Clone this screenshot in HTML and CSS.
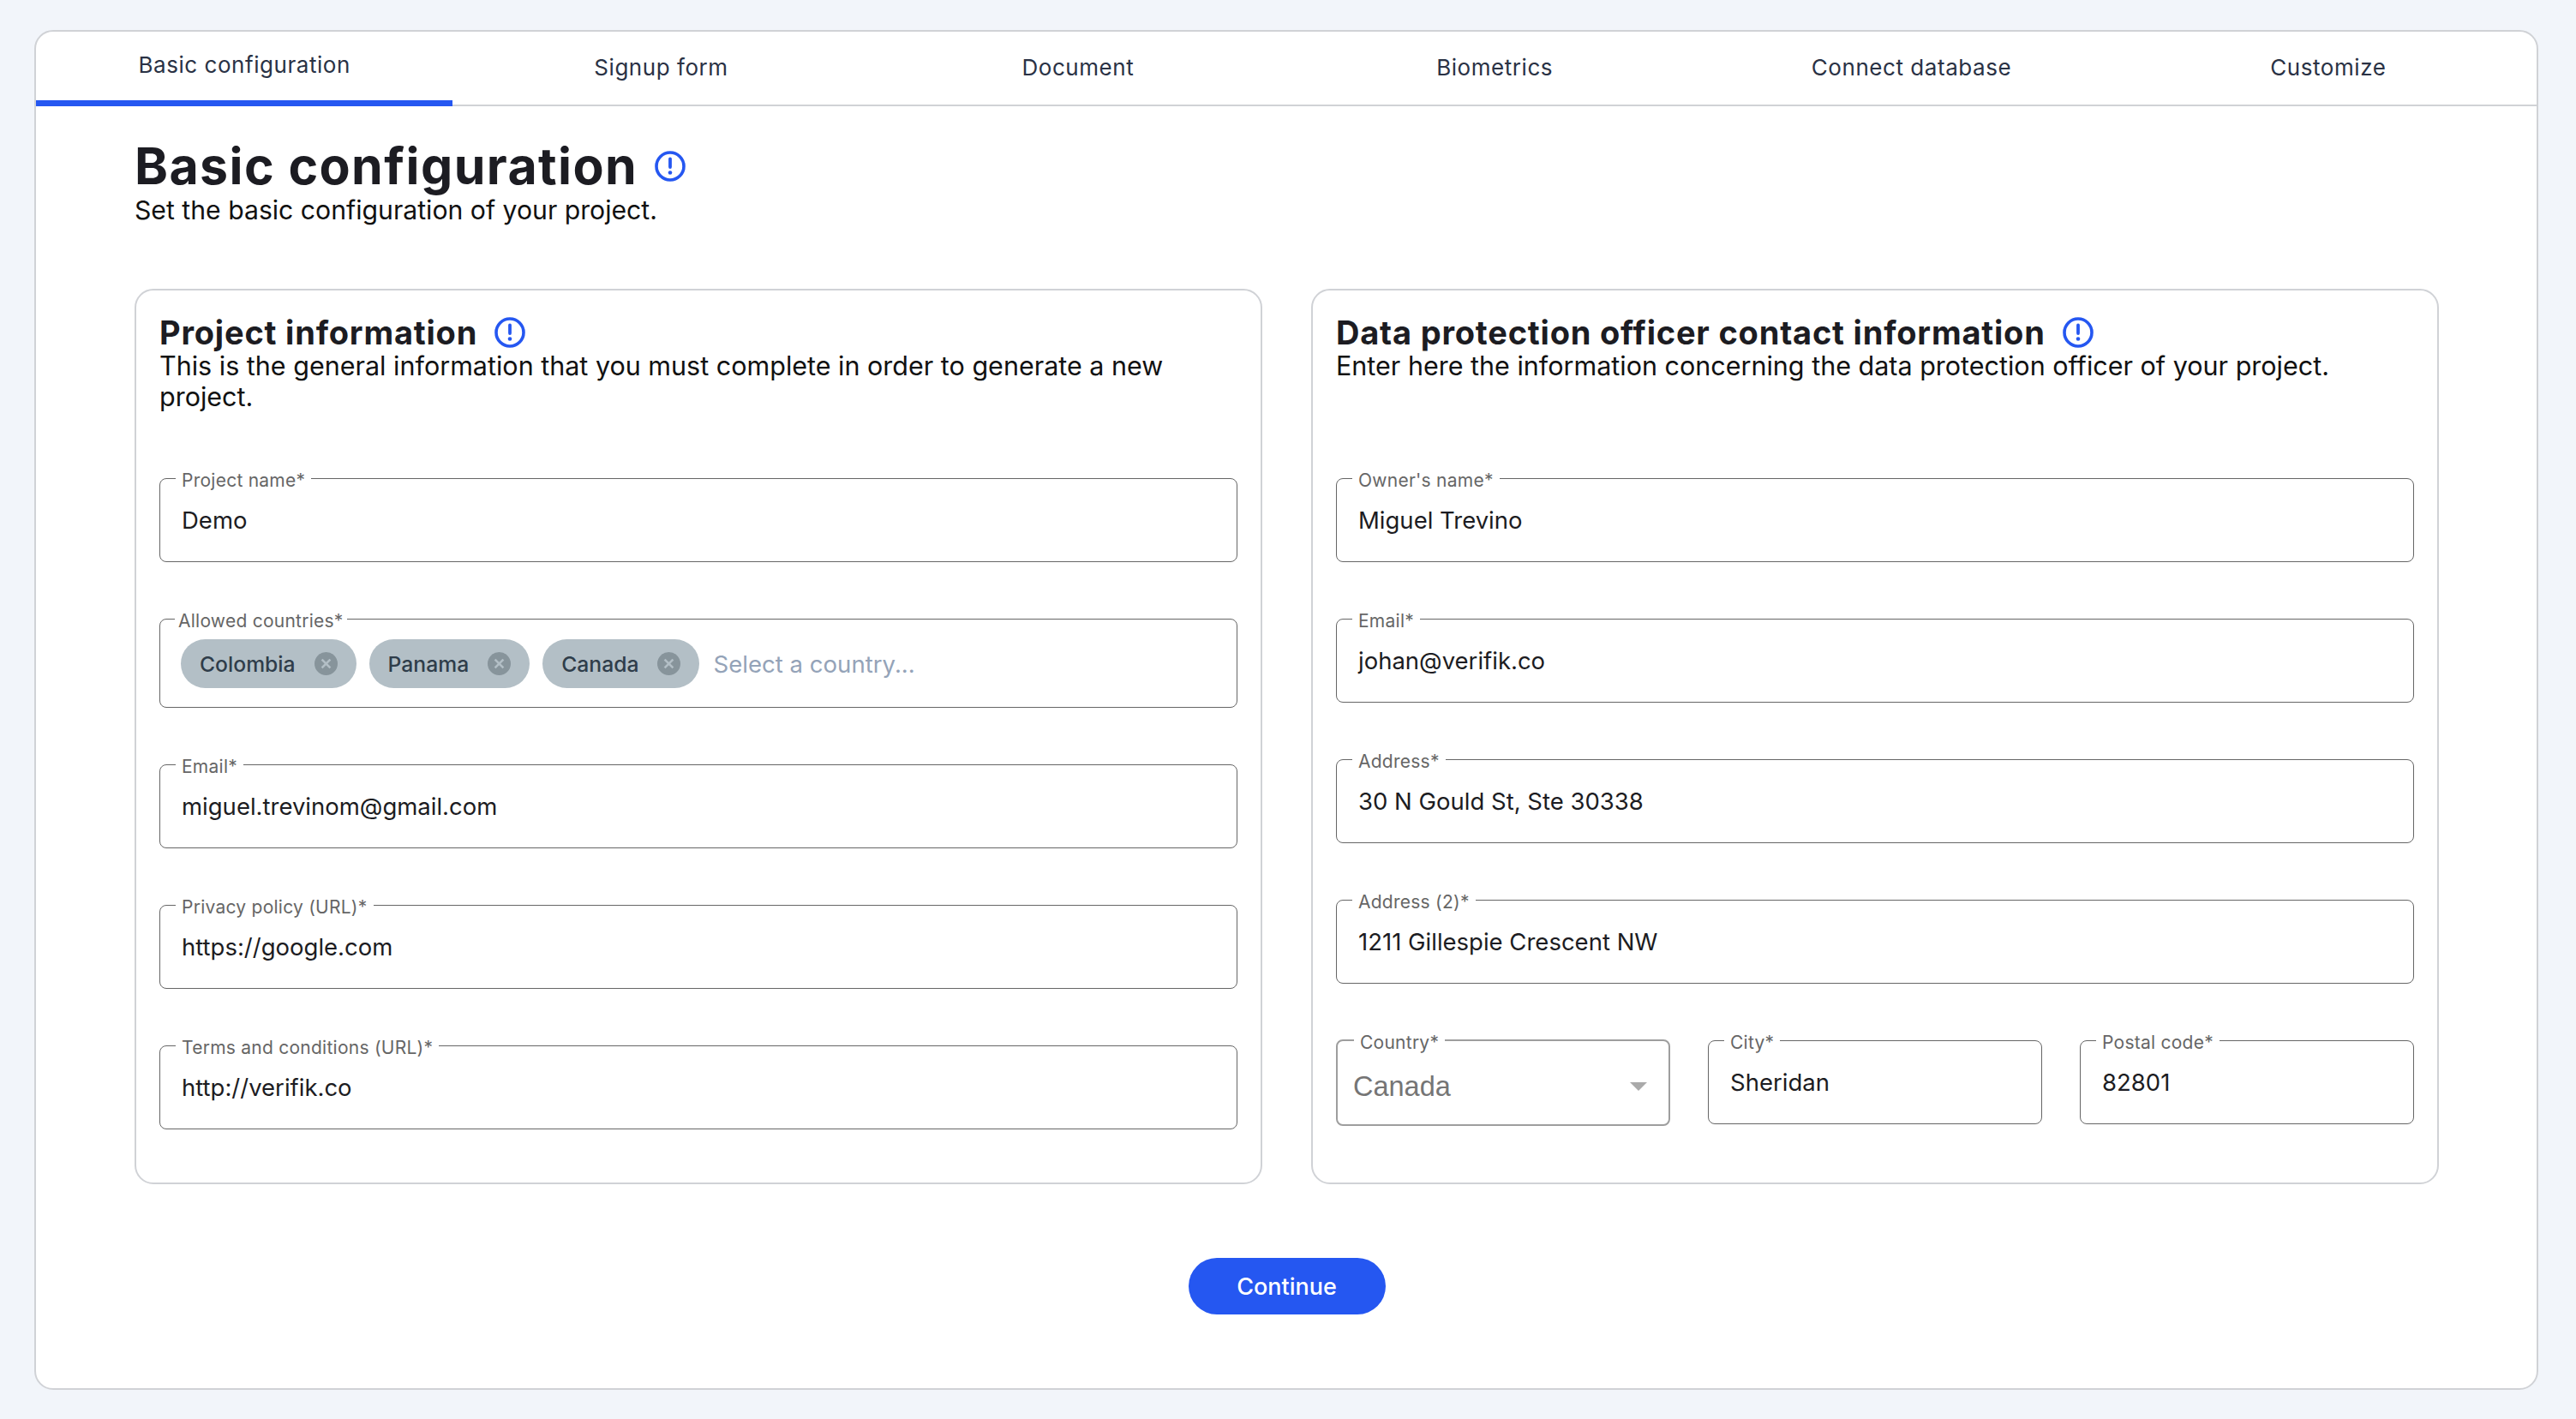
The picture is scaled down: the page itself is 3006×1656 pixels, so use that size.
FILE: index.html
```html
<!DOCTYPE html>
<html lang="en">
<head>
<meta charset="utf-8">
<title>Basic configuration</title>
<link rel="stylesheet" href="styles.css">
</head>
<body>
<svg class="defs" width="0" height="0" aria-hidden="true">
  <symbol id="alert" viewBox="0 0 36 36">
    <circle cx="18" cy="18" r="16" fill="none" stroke="currentColor" stroke-width="3.6"/>
    <path d="M18 9.5v9.5" fill="none" stroke="currentColor" stroke-width="3.8" stroke-linecap="round"/>
    <circle cx="18" cy="25.5" r="2.3" fill="currentColor"/>
  </symbol>
  <symbol id="close" viewBox="0 0 27 27">
    <circle cx="13.5" cy="13.5" r="13.5" fill="#87949b"/>
    <path d="M8.6 8.6l9.8 9.8M18.4 8.6l-9.8 9.8" fill="none" stroke="#b3bfc6" stroke-width="2.6"/>
  </symbol>
</svg>
<main class="shell">
  <nav class="tabs">
    <a class="tab tab-active">Basic configuration</a>
    <a class="tab">Signup form</a>
    <a class="tab">Document</a>
    <a class="tab">Biometrics</a>
    <a class="tab">Connect database</a>
    <a class="tab">Customize</a>
  </nav>
  <div class="content">
    <header class="page-head">
      <h1 class="page-title">Basic configuration <svg class="icon"><use href="#alert"/></svg></h1>
      <p class="page-sub">Set the basic configuration of your project.</p>
    </header>
    <div class="panels">
      <section class="panel">
        <div class="panel-head">
          <h2 class="panel-title">Project information <svg class="icon"><use href="#alert"/></svg></h2>
          <p class="panel-sub">This is the general information that you must complete in order to generate a new project.</p>
        </div>
        <div class="fields">
          <fieldset class="field"><legend>Project name*</legend><div class="value">Demo</div></fieldset>
          <fieldset class="field field-chips"><legend>Allowed countries*</legend>
            <div class="chips">
              <span class="chip">Colombia<svg class="chip-x"><use href="#close"/></svg></span>
              <span class="chip">Panama<svg class="chip-x"><use href="#close"/></svg></span>
              <span class="chip">Canada<svg class="chip-x"><use href="#close"/></svg></span>
              <span class="placeholder">Select a country...</span>
            </div>
          </fieldset>
          <fieldset class="field"><legend>Email*</legend><div class="value">miguel.trevinom@gmail.com</div></fieldset>
          <fieldset class="field"><legend>Privacy policy (URL)*</legend><div class="value">https://google.com</div></fieldset>
          <fieldset class="field"><legend>Terms and conditions (URL)*</legend><div class="value">http://verifik.co</div></fieldset>
        </div>
      </section>
      <section class="panel">
        <div class="panel-head">
          <h2 class="panel-title">Data protection officer contact information <svg class="icon"><use href="#alert"/></svg></h2>
          <p class="panel-sub">Enter here the information concerning the data protection officer of your project.</p>
        </div>
        <div class="fields">
          <fieldset class="field"><legend>Owner's name*</legend><div class="value">Miguel Trevino</div></fieldset>
          <fieldset class="field"><legend>Email*</legend><div class="value">johan@verifik.co</div></fieldset>
          <fieldset class="field"><legend>Address*</legend><div class="value">30 N Gould St, Ste 30338</div></fieldset>
          <fieldset class="field"><legend>Address (2)*</legend><div class="value">1211 Gillespie Crescent NW</div></fieldset>
          <div class="triple">
            <fieldset class="field field-select"><legend>Country*</legend><div class="select-value"><span>Canada</span><i class="caret"></i></div></fieldset>
            <fieldset class="field"><legend>City*</legend><div class="value">Sheridan</div></fieldset>
            <fieldset class="field"><legend>Postal code*</legend><div class="value">82801</div></fieldset>
          </div>
        </div>
      </section>
    </div>
    <div class="actions"><button class="continue" type="button">Continue</button></div>
  </div>
</main>
</body>
</html>
```
FILE: styles.css
```css
* { box-sizing: border-box; }
html, body { margin: 0; padding: 0; }
body {
  width: 3006px;
  height: 1656px;
  background: #f2f5fa;
  padding: 35px 44px 34px 40px;
  font-family: Inter, "Liberation Sans", sans-serif;
  color: #1c1c22;
  overflow: hidden;
}
.defs { position: absolute; }
.shell {
  height: 1587px;
  background: #fff;
  border: 2px solid #d0d2d6;
  border-radius: 22px;
  overflow: hidden;
}
.tabs {
  display: grid;
  grid-template-columns: repeat(6, 1fr);
  height: 87px;
  border-bottom: 2px solid #d0d2d6;
}
.tab {
  display: flex;
  align-items: center;
  justify-content: center;
  padding-bottom: 4px;
  font-size: 26px;
  letter-spacing: 0.55px;
  color: #2a3245;
}
.tab-active {
  height: 87px;
  padding-bottom: 4px;
  border-bottom: 7px solid #2557f1;
}
.content { padding: 0 114px 0 115px; }
.page-head { height: 213px; padding-top: 35px; }
.page-title {
  margin: 0;
  display: flex;
  align-items: center;
  gap: 20px;
  font-size: 59px;
  line-height: 70px;
  font-weight: 700;
  letter-spacing: 1.4px;
  color: #1c1c22;
}
.page-title .icon { width: 36px; height: 36px; }
.page-sub {
  margin: -2px 0 0;
  font-size: 30.2px;
  line-height: 36px;
  color: #111;
}
.icon { color: #2557f1; flex: none; }
.panels {
  display: grid;
  grid-template-columns: 1fr 1fr;
  gap: 57px;
}
.panel {
  height: 1045px;
  border: 2px solid #d0d2d6;
  border-radius: 22px;
  padding: 0 27px;
}
.panel-head { height: 207px; padding-top: 25px; }
.panel-title {
  margin: 0;
  display: flex;
  align-items: center;
  gap: 20px;
  font-size: 38px;
  line-height: 48px;
  font-weight: 700;
  letter-spacing: 0.8px;
  color: #1c1c22;
}
.panel-title .icon { width: 36px; height: 36px; }
.panel-sub {
  margin: -3px 0 0;
  font-size: 30.5px;
  line-height: 36px;
  color: #111;
}
.fields {
  display: flex;
  flex-direction: column;
  gap: 54px;
}
.field {
  flex: none;
  display: block;
  margin: 0;
  min-width: 0;
  height: 110px;
  padding: 0;
  border: 1px solid #666;
  border-radius: 8px;
}
.field legend {
  margin-left: 18px;
  padding: 0 7px;
  font-size: 21px;
  line-height: 24px;
  letter-spacing: 0.25px;
  color: #666;
  transform: translateY(3px);
}
.value {
  padding: 0 25px;
  font-size: 27.5px;
  line-height: 74px;
  color: #1c1c22;
}
.field-chips {
  height: 116px;
}
.field-chips legend { margin-left: 17px; padding: 0 4px; }
.chips { display: flex; align-items: center; gap: 15px; padding: 12px 24px 0; }
.chip {
  display: inline-flex;
  align-items: center;
  gap: 22px;
  height: 57px;
  padding: 0 22px;
  border-radius: 29px;
  background: #b3bfc6;
  color: #2f3d4a;
  font-size: 24.7px;
  font-weight: 500;
}
.chip-x { width: 27px; height: 27px; flex: none; }
.placeholder { margin-left: 1px; font-size: 27.6px; color: #94a3b8; }
.triple {
  display: grid;
  grid-template-columns: repeat(3, 1fr);
  gap: 44px;
}
.field-select {
  border: 2px solid #9e9e9e;
  height: 112px;
}
.field-select legend { margin-left: 19px; }
.select-value {
  display: flex;
  align-items: center;
  justify-content: space-between;
  height: 84px;
  padding: 0 25px 0 18px;
  font-family: "Liberation Sans", Arial, sans-serif;
  font-size: 32.5px;
  color: #757575;
}
.caret {
  width: 0;
  height: 0;
  border-left: 10px solid transparent;
  border-right: 10px solid transparent;
  border-top: 10px solid #aaa;
}
.actions { display: flex; justify-content: center; padding-top: 86px; }
.continue {
  width: 230px;
  height: 66px;
  border: 0;
  border-radius: 33px;
  background: #2557f1;
  color: #fff;
  font-family: Inter, "Liberation Sans", sans-serif;
  font-size: 27px;
  font-weight: 500;
}
```
